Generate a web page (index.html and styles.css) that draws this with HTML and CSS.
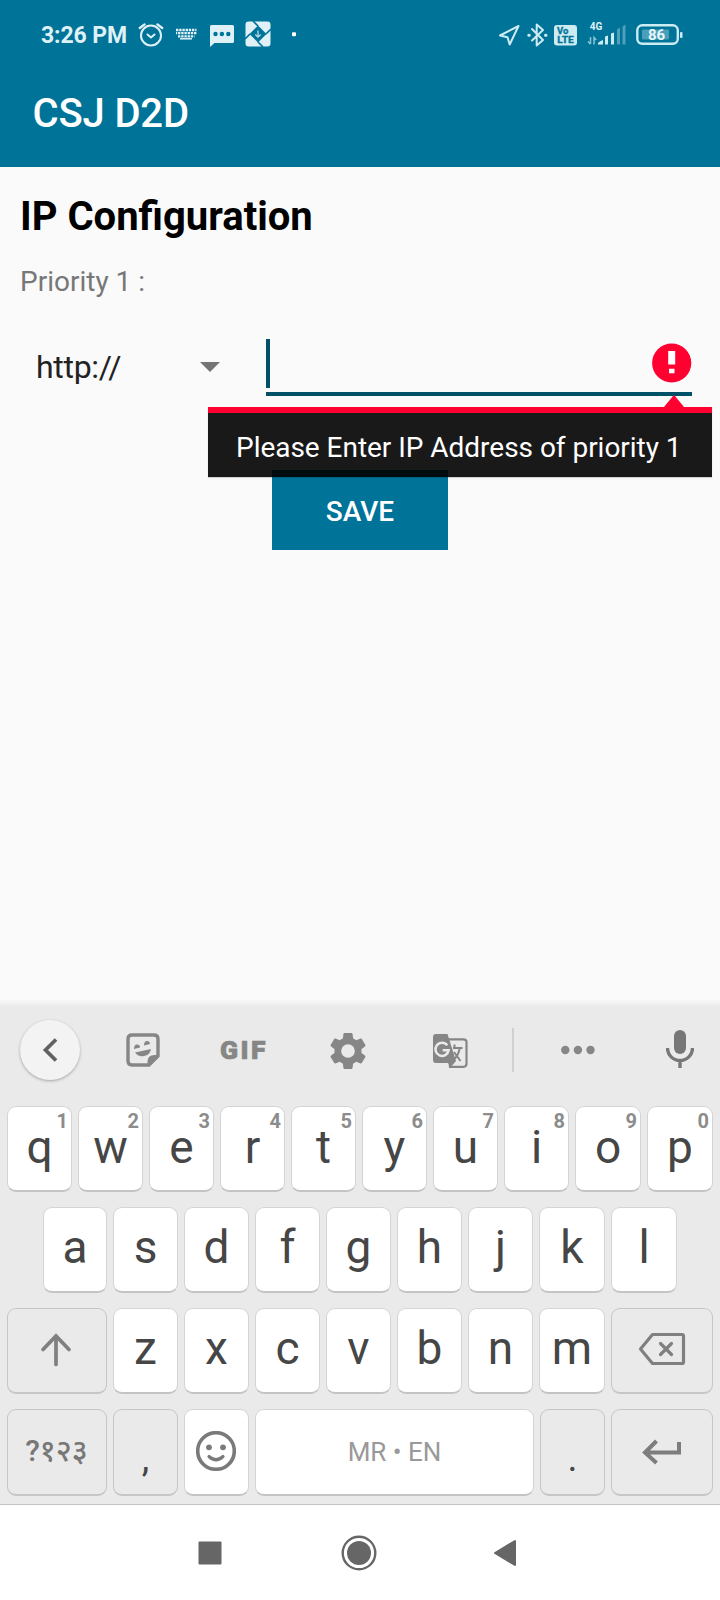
FILE: index.html
```html
<!DOCTYPE html>
<html lang="en">
<head>
<meta charset="utf-8">
<title>CSJ D2D</title>
<link rel="stylesheet" href="styles.css">
</head>
<body>
<div class="screen">
  <header class="app-header">
    <div class="status">
      <span class="clock">3:26 PM</span>
      <svg class="status-left" width="172" height="30" viewBox="136 20 172 30">
        <g fill="none" stroke="#dff1f6" stroke-width="2" stroke-linecap="round" stroke-linejoin="round">
          <circle cx="151" cy="35.500" r="10"/>
          <path d="M147.500 34.500l3.500 3 3.500-3"/>
          <path d="M139.800 28l4.800-3.600M162.200 28l-4.800-3.600" stroke-width="2.400"/>
        </g>
        <g stroke="#dff1f6" stroke-width="2.300" stroke-dasharray="2.400 0.800">
          <path d="M176 30h20.500"/><path d="M176 33.200h20.500" stroke-dashoffset="1.200"/><path d="M178 36.300h16.500"/>
        </g>
        <path d="M180 38.800h12" stroke="#dff1f6" stroke-width="1.500"/>
        <path d="M211.500 25h21q1.500 0 1.500 1.500v15q0 1.500-1.500 1.500h-18l-4.500 4V26.500q0-1.500 1.500-1.500z" fill="#dff1f6"/>
        <g fill="#007399"><circle cx="215.500" cy="34" r="2.200"/><circle cx="221.900" cy="34" r="2.200"/><circle cx="228.300" cy="34" r="2.200"/></g>
        <rect x="245.500" y="21.500" width="25" height="25" rx="3" fill="#dff1f6"/>
        <path d="M258 26l-5-5M266 34l5-5M258 42l5 5M250 34l-5 5" stroke="#007399" stroke-width="1.700"/>
        <path d="M258 25.500l8.500 8.500-8.500 8.500-8.500-8.500z" fill="#007399"/>
        <path d="M258 30.500v6.500m-2.700-2.500l2.700 2.700 2.700-2.700" fill="none" stroke="#b5dce8" stroke-width="1.300"/>
        <rect x="292" y="32.200" width="4" height="4" rx="1" fill="#fff"/>
      </svg>
      <svg class="status-right" width="188" height="34" viewBox="496 18 188 34">
        <g fill="none" stroke="#cdebf2" stroke-width="2" stroke-linejoin="round" stroke-linecap="round">
          <path d="M518.500 26l-18.500 9.500 7.500 1.800 2.200 7.200z"/>
          <path d="M532 29l11 11-6.300 5.500V24.500l6.300 5.500-11 10.500"/>
          <path d="M528.800 35.300h.5M545.500 35.300h.5" stroke-width="3"/>
        </g>
        <rect x="554" y="25" width="23" height="20.500" rx="3" fill="#cdebf2"/>
        <text class="volte" x="557" y="34">Vo</text>
        <text class="volte" x="557.300" y="43" textLength="16.500" lengthAdjust="spacingAndGlyphs">LTE</text>
        <text class="network" x="589.800" y="30">4G</text>
        <g fill="#cdebf2">
          <path d="M598 44.500v-1.500q2-2 5-3v4.500zM605 36.500l3-1v9h-3zM611 33.500l3-1v12h-3z"/>
          <path d="M617 29.500l3-2v17h-3zM622.500 26.500l3-2v20h-3z" opacity=".38"/>
        </g>
        <path d="M590.500 37v7M588 41.500l2.200 2.500M594 44.500v-7l2.200 2.500" stroke="#8cc3d5" stroke-width="1.500" fill="none"/>
        <rect x="637.300" y="25.300" width="40.500" height="18.500" rx="5" fill="none" stroke="#cdebf2" stroke-width="2.400"/>
        <rect x="642" y="29.500" width="27" height="10" rx="1" fill="#4b9eb8"/>
        <rect x="680" y="32" width="2.500" height="6" rx="1" fill="#cdebf2"/>
        <text class="battery" x="648" y="40">86</text>
      </svg>
    </div>
    <h1 class="app-title">CSJ D2D</h1>
  </header>

  <main class="content">
    <h2 class="heading">IP Configuration</h2>
    <p class="label">Priority 1 :</p>
    <div class="form-row">
      <div class="spinner"><span>http://</span>
        <svg width="20" height="10" viewBox="0 0 20 10"><path d="M0 0h20L10 10z" fill="#757575"/></svg>
      </div>
      <div class="field">
        <span class="caret"></span>
        <svg width="40" height="40" viewBox="0 0 40 40"><circle cx="19.700" cy="20" r="19.600" fill="#ff0031"/><path d="M16.200 8h7v13.500h-7zM17 25.800h5.500v4.500h-5.500z" fill="#fff"/></svg>
        <div class="error-popup">
          <svg class="error-arrow" width="22" height="13" viewBox="0 0 22 13"><path d="M1 13v-1L10 1q1-1 2 0l9 11v1z" fill="#ff0031"/></svg>
          Please Enter IP Address of priority 1
        </div>
      </div>
    </div>
    <button class="save">SAVE</button>
  </main>

  <section class="keyboard">
    <div class="tools">
      <span class="back"><svg width="16" height="26" viewBox="0 0 16 26"><path d="M14 2.500L3.500 13 14 23.500" fill="none" stroke="#616161" stroke-width="3.700"/></svg></span>
      <svg class="sticker" width="36" height="36" viewBox="125 1032 36 36">
        <path d="M132 1035h22q4 0 4 4v17l-9 9h-17q-4 0-4-4v-22q0-4 4-4z" fill="none" stroke="#868686" stroke-width="3.400"/>
        <path d="M147.500 1066v-4q0-7 7-7h4.500z" fill="#868686"/>
        <path d="M134 1049q0-4.500 3-4.500t3 3zM144 1045.500q0-4.500 3-4.500t3 3z" fill="#868686"/>
        <path d="M135 1052.500l16-3.500q-1 6-7 7t-9-3.500z" fill="#868686"/>
      </svg>
      <span class="gif">GIF</span>
      <svg class="gear" width="36" height="36" viewBox="2 2 20 20"><path fill="#868686" d="M19.430 12.980c.04-.32.07-.64.07-.98s-.03-.66-.07-.98l2.110-1.650c.19-.15.24-.42.12-.64l-2-3.460c-.12-.22-.39-.3-.61-.22l-2.490 1c-.52-.4-1.080-.73-1.690-.98l-.38-2.650C14.460 2.180 14.250 2 14 2h-4c-.25 0-.46.18-.49.42l-.38 2.650c-.61.25-1.170.59-1.690.98l-2.490-1c-.23-.09-.49 0-.61.22l-2 3.460c-.13.22-.07.49.12.64l2.110 1.650c-.04.32-.07.65-.07.98s.03.66.07.98l-2.110 1.650c-.19.15-.24.42-.12.64l2 3.460c.12.22.39.3.61.22l2.490-1c.52.4 1.080.73 1.690.98l.38 2.650c.03.24.24.42.49.42h4c.25 0 .46-.18.49-.42l.38-2.650c.61-.25 1.170-.59 1.690-.98l2.490 1c.23.09.49 0 .61-.22l2-3.460c.12-.22.07-.49-.12-.64zM12 15.800a3.800 3.800 0 1 1 0-7.600 3.800 3.800 0 0 1 0 7.600z"/></svg>
      <svg class="translate" width="36" height="36" viewBox="432 1033 36 36">
        <path d="M448 1039.300h15.500q3 0 3 3v21.500q0 3-3 3h-13.500z" fill="none" stroke="#868686" stroke-width="2.200"/>
        <path d="M436 1034h11.500l8.500 27-5.500 6.500-2.500-4.500h-12q-3 0-3-3v-23q0-3 3-3z" fill="#868686"/>
        <path d="M447.300 1045.300a6.600 6.600 0 1 0 1.300 5h-6" fill="none" stroke="#eaeaea" stroke-width="2.500"/>
        <path d="M453 1048h9.500M454.500 1044.500v3M459.800 1048q-1.500 8-6 11.500M454 1052l6.500 9" fill="none" stroke="#868686" stroke-width="2"/>
      </svg>
      <span class="divider"></span>
      <svg class="more" width="34" height="10" viewBox="0 0 34 10"><g fill="#868686"><circle cx="4.300" cy="5" r="4.200"/><circle cx="16.900" cy="5" r="4.200"/><circle cx="29.500" cy="5" r="4.200"/></g></svg>
      <svg class="mic" width="28" height="38" viewBox="0 0 28 38"><rect x="8" y="0" width="12" height="24" rx="6" fill="#777"/><path d="M1.500 18a12.500 12.500 0 0 0 25 0M14 30.500V38" fill="none" stroke="#777" stroke-width="3.400"/></svg>
    </div>
    <div class="keys">
      <div class="row numbered">
        <span class="key">q<sup>1</sup></span><span class="key">w<sup>2</sup></span><span class="key">e<sup>3</sup></span><span class="key">r<sup>4</sup></span><span class="key">t<sup>5</sup></span><span class="key">y<sup>6</sup></span><span class="key">u<sup>7</sup></span><span class="key">i<sup>8</sup></span><span class="key">o<sup>9</sup></span><span class="key">p<sup>0</sup></span>
      </div>
      <div class="row inset">
        <span class="key">a</span><span class="key">s</span><span class="key">d</span><span class="key">f</span><span class="key">g</span><span class="key">h</span><span class="key">j</span><span class="key">k</span><span class="key">l</span>
      </div>
      <div class="row mixed">
        <span class="key grey shift"><svg width="32" height="34" viewBox="0 0 32 34"><path d="M16 31.500V3M3 16.500L16 3l13 13.500" fill="none" stroke="#808080" stroke-width="3.700" stroke-linecap="round"/></svg></span>
        <span class="key">z</span><span class="key">x</span><span class="key">c</span><span class="key">v</span><span class="key">b</span><span class="key">n</span><span class="key">m</span>
        <span class="key grey backspace"><svg width="48" height="34" viewBox="0 0 48 34"><path d="M14.500 2.500H44q1.500 0 1.500 1.500v26q0 1.500-1.500 1.500H14.500L2.500 17zM22.500 11.500l11 11M33.500 11.500l-11 11" fill="none" stroke="#808080" stroke-width="3.200" stroke-linecap="round" stroke-linejoin="round"/></svg></span>
      </div>
      <div class="row bottom">
        <span class="key grey symbols">?१२३</span>
        <span class="key grey punct">,</span>
        <span class="key smile"><svg width="40" height="40" viewBox="0 0 40 40"><circle cx="20" cy="20" r="18.300" fill="none" stroke="#7a7a7a" stroke-width="3.600"/><circle cx="13" cy="16.300" r="2.900" fill="#7a7a7a"/><circle cx="27" cy="16.300" r="2.900" fill="#7a7a7a"/><path d="M13 25.500q7 6.500 14 0" fill="none" stroke="#7a7a7a" stroke-width="3.200" stroke-linecap="round"/></svg></span>
        <span class="key space">MR • EN</span>
        <span class="key grey punct">.</span>
        <span class="key grey"><svg class="enter" width="40" height="26" viewBox="0 0 40 26"><path d="M37 3v10.500H3M14.500 2L3 13.500 14.500 24" fill="none" stroke="#7d7d7d" stroke-width="4"/></svg></span>
      </div>
    </div>
  </section>

  <nav class="system-nav">
    <svg width="24" height="24" viewBox="0 0 24 24"><rect x=".5" y=".5" width="23" height="23" rx="1" fill="#666"/></svg>
    <svg width="36" height="36" viewBox="0 0 36 36"><circle cx="18" cy="18" r="16.300" fill="none" stroke="#666" stroke-width="2.400"/><circle cx="18" cy="18" r="12" fill="#666"/></svg>
    <svg width="24" height="28" viewBox="0 0 24 28"><path d="M22 2v24L2 14z" fill="#666" stroke="#666" stroke-width="2" stroke-linejoin="round"/></svg>
  </nav>
</div>
</body>
</html>
```
FILE: styles.css
```css
* { box-sizing: border-box; }
body { margin: 0; font-family: Roboto, "Noto Sans", sans-serif; }
svg { display: block; flex: none; }
h1, h2, p { margin: 0; }

.screen { display: flex; flex-direction: column; width: 720px; height: 1600px; overflow: hidden; background: #fafafa; }

.app-header { height: 167px; background: #007399; color: #fff; }
.status { display: flex; align-items: center; height: 70px; padding: 0 36px 0 41px; }
.clock { width: 95px; padding-top: 1px; font-size: 23px; font-weight: 700; color: #dff1f6; white-space: nowrap; line-height: 30px; letter-spacing: -.1px; }
.status-right { margin-left: auto; }
.volte { font: 700 9.500px Roboto, sans-serif; fill: #007399; stroke: #007399; stroke-width: .3px; }
.network { font: 700 10px Roboto, sans-serif; fill: #dff1f6; }
.battery { font: 700 15px Roboto, sans-serif; fill: #e6f8fb; }
.app-title { padding-left: 32.500px; font-size: 40px; font-weight: 500; line-height: 88px; letter-spacing: -.15px; }

.content { display: flex; flex-direction: column; height: 833px; padding: 26px 28px 0 20px; }
.heading { font-size: 40px; font-weight: 700; line-height: 48px; color: #000; }
.label { margin-top: 24px; font-size: 28px; line-height: 34px; color: #777; }
.form-row { display: flex; margin-top: 40px; height: 57px; }
.spinner { display: flex; align-items: center; justify-content: space-between; width: 200px; padding-left: 16px; height: 55px; font-size: 32px; letter-spacing: -.3px; color: #222; }
.field { position: relative; display: flex; justify-content: space-between; width: 426px; margin-left: 46px; border-bottom: 4px solid #005068; }
.field > svg { margin-top: 4px; }
.caret { width: 4px; height: 49px; background: #005068; }
.error-popup { position: absolute; top: 68px; right: -20px; width: 504px; height: 70px; padding: 6px 0 0 28px; border-top: 6px solid #ff0031; background: rgba(0, 0, 0, .9); background-clip: padding-box; color: #fff; font-size: 28px; line-height: 58px; letter-spacing: -.03px; white-space: nowrap; box-shadow: 0 1px 1px rgba(0, 0, 0, .15); z-index: 1; }
.error-arrow { position: absolute; top: -18px; right: 27px; }
.save { width: 176px; height: 80px; margin: 74px 0 0 252px; padding: 2px 0 0; border: 0; background: #007399; color: #fff; font: 500 28px Roboto, sans-serif; }

.keyboard { height: 505px; padding-top: 6px; background: linear-gradient(#f8f8f8, #efefef 5px, #eaeaea 6px); border-bottom: 1px solid #c4c4c4; }
.tools { display: flex; align-items: center; height: 100px; padding: 0 26px 12px 20px; }
.back { display: grid; place-items: center; width: 60px; height: 60px; border-radius: 50%; background: #f3f3f3; box-shadow: 0 1px 3px rgba(0, 0, 0, .3); }
.sticker { margin: 0 0 0 45px; }
.gif { width: 50px; margin: -2px 0 0 59px; font-size: 26.500px; font-weight: 900; letter-spacing: 2.500px; color: #868686; -webkit-text-stroke: .7px #868686; }
.gear { margin: 2px 0 0 60px; }
.translate { margin: 2px 0 0 66px; }
.divider { width: 2px; height: 44px; margin-left: 44px; background: #cfd1d1; }
.more { margin-left: 47px; }
.mic { margin-left: auto; margin-top: -2px; }

.keys { display: flex; flex-direction: column; gap: 15px; padding: 0 7px; }
.row { display: grid; grid-template-columns: repeat(8, 65px) 66px 66px; gap: 6px; height: 86px; }
.inset { grid-template-columns: 64px repeat(6, 65px) 66px 66px; padding: 0 36px; }
.mixed { grid-template-columns: 100px repeat(6, 65px) 66px 102px; }
.bottom { grid-template-columns: 100px 65px 65px 279px 65px 102px; height: 87px; }
.key { position: relative; display: flex; align-items: center; justify-content: center; padding-bottom: 5px; border: 1px solid #d4d4d4; border-bottom: 2px solid #c4c4c4; border-radius: 9px; background: #fff; color: #464646; font-size: 46px; line-height: 54px; }
.numbered .key { padding-bottom: 3px; }
.key sup { position: absolute; top: 3px; right: 3px; font-size: 20px; line-height: 22px; font-weight: 700; color: #8c8c8c; }
.grey { background: #eaeaea; border-color: #c6c6c6; }
.shift { padding: 0 2px 1px 0; }
.backspace { padding-bottom: 3px; }
.symbols { font-size: 30px; font-weight: 500; color: #777; padding: 0 1px 2px 0; }
.punct { font-size: 38px; padding: 12px 0 0; }
.smile { padding: 0 2px 3px 0; }
.space { font-size: 26px; color: #999; padding-bottom: 0; }
.enter { margin: 4px 0 0; }

.system-nav { display: flex; align-items: center; justify-content: center; height: 95px; padding-right: 5px; background: #fff; }
.system-nav svg:nth-child(1) { margin-right: 119px; }
.system-nav svg:nth-child(3) { margin-left: 116px; }
```
